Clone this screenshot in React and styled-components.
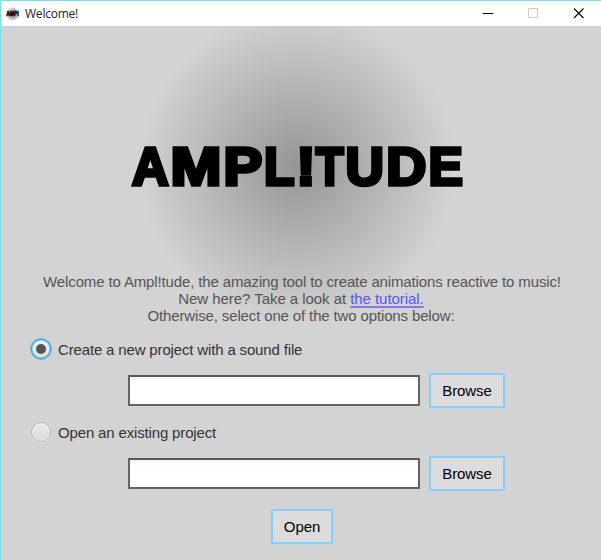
import React from "react";
import styled, { createGlobalStyle, css } from "styled-components";

const GlobalStyle = createGlobalStyle`
  * { box-sizing: border-box; }
  body { margin: 0; background: #d3d3d3; overflow: hidden; }
`;

const Window = styled.div`
  display: flex;
  flex-direction: column;
  width: 601px;
  height: 560px;
  border-top: 1px solid #79dfe8;
  border-left: 1px solid #79dfe8;
  background: #d3d3d3;
  font-family: "Liberation Sans", Arial, sans-serif;
  font-size: 15px;
`;

const TitleBar = styled.header`
  display: flex;
  align-items: center;
  height: 25px;
  flex: none;
  padding-left: 4px;
  background: #fff;
`;

const Title = styled.span`
  flex: 1;
  margin-left: 4px;
  font: 12px/24px "Open Sans", "Noto Sans", sans-serif;
  letter-spacing: -0.22px;
  color: #222;
`;

const WindowButton = styled.button`
  width: 45px;
  height: 25px;
  padding: 0;
  border: 0;
  background: none;
  color: ${(p) => (p.disabled ? "#ccc" : "#000")};
  svg { display: block; margin: 0 auto; }
`;

const Content = styled.main`
  flex: 1;
  display: flex;
  flex-direction: column;
  background: radial-gradient(circle 159px at 296px 141px,
    #959595 0%, #a7a7a7 28%, #b9b9b9 57%, #c9c9c9 84%, #d1d1d1 95%, #d3d3d3 100%);
`;

const Logo = styled.svg`
  display: block;
  flex: none;
  width: 600px;
  height: 247px;
`;

const Wordmark = styled.text`
  font: bold 53px "Liberation Sans", Arial, sans-serif;
  fill: #000;
  stroke: #000;
  stroke-width: 3.6px;
  stroke-linejoin: miter;
`;

const IconSvg = styled.svg`
  display: block;
  flex: none;
  width: 16px;
  height: 18px;
  overflow: visible;
`;

const IconText = styled.text`
  font: bold 7.5px "Liberation Sans", Arial, sans-serif;
  stroke: #000;
  stroke-width: 0.5px;
`;

const Intro = styled.div`
  height: 51px;
  text-align: center;
  line-height: 17px;
  color: #555;
`;

const IntroLine = styled.p`
  margin: 0;
  padding-left: ${(p) => p.$indent || 0}px;
  white-space: nowrap;
  letter-spacing: ${(p) => p.$spacing || 0}px;
`;

const Link = styled.a`
  color: #5a55f5;
  text-decoration: underline;
  text-decoration-color: #7d7aec;
  text-decoration-thickness: 2px;
  text-underline-offset: 2px;
`;

const Option = styled.section`
  height: 83px;
`;

const OptionLabel = styled.label`
  display: flex;
  align-items: center;
  gap: 7px;
  height: 22px;
  margin: 14px 0 0 30px;
  color: #333;
  white-space: nowrap;
  letter-spacing: -0.155px;
`;

const Radio = styled.span`
  display: grid;
  place-items: center;
  flex: none;
  width: 20px;
  height: 20px;
  border-radius: 50%;
  border: 1px solid #b5b5b5;
  background: linear-gradient(#ececec, #dadada);
  box-shadow: 0 1px 0 #e6e6e6, inset 0 0 0 1px #eee;
  ${(p) => p.$checked && css`
    border: 1px solid #1ba1d6;
    background: linear-gradient(#f2f2f2, #dedede);
    box-shadow: 0 0 1px 0.7px #4fb4de, inset 0 0 1px #1ba1d6;
    &::after {
      content: "";
      width: 10px;
      height: 10px;
      border-radius: 50%;
      background: #555;
    }
  `}
`;

const FieldRow = styled.div`
  display: flex;
  align-items: center;
  gap: 9px;
  height: 35px;
  margin: 13px 0 0 127px;
`;

const Field = styled.input`
  width: 292px;
  height: 31px;
  padding: 0 8px;
  border: 2px solid #646464;
  border-top-color: #585858;
  border-radius: 1px;
  outline: 0;
  background: linear-gradient(#f3f3f3, #fff 5px);
  font: inherit;
`;

const Button = styled.button`
  width: ${(p) => p.$width}px;
  height: 35px;
  padding: 0;
  border: 2px solid #87cefa;
  background: #dcdcdc;
  color: #000;
  font: inherit;
  letter-spacing: -0.1px;
`;

const Footer = styled.footer`
  display: flex;
  margin: 19px 0 0 270px;
`;

const AppIcon = () => (
  <IconSvg viewBox="0 -2 16 18">
    <defs>
      <radialGradient id="halo">
        <stop offset="0" stopColor="#888" />
        <stop offset="0.7" stopColor="#bbb" />
        <stop offset="1" stopColor="#eee" />
      </radialGradient>
    </defs>
    <circle cx="7.8" cy="7" r="6.8" fill="url(#halo)" />
    <IconText x="1.3" y="9.3" textLength="12.6" lengthAdjust="spacingAndGlyphs">AMP!</IconText>
  </IconSvg>
);

/* Each letter of the wordmark with its left edge and set width. */
const WORDMARK = [
  ["A", 131, 36.6],
  ["M", 169.5, 50.9],
  ["P", 222.6, 38.7],
  ["L", 263, 30.4],
  ["!", 295.2, 19.4],
  ["T", 314.8, 27.8],
  ["U", 344.4, 38.4],
  ["D", 385.3, 40.1],
  ["E", 427.5, 34.4],
];

function FileOption({ label, checked }) {
  return (
    <Option>
      <OptionLabel>
        <Radio $checked={checked} />
        {label}
      </OptionLabel>
      <FieldRow>
        <Field aria-label={label} />
        <Button $width={76}>Browse</Button>
      </FieldRow>
    </Option>
  );
}

export default function App() {
  return (
    <Window>
      <GlobalStyle />
      <TitleBar>
        <AppIcon />
        <Title>Welcome!</Title>
        <WindowButton aria-label="Minimize">
          <svg width="11" height="11"><path d="M0 5.5H10" stroke="currentColor" /></svg>
        </WindowButton>
        <WindowButton aria-label="Maximize" disabled>
          <svg width="11" height="11"><path d="M.5 .5H9.5V9.5H.5Z" fill="none" stroke="currentColor" /></svg>
        </WindowButton>
        <WindowButton aria-label="Close">
          <svg width="11" height="11"><path d="M1 .5L10.5 10M10.5 .5L1 10" stroke="currentColor" strokeWidth="1.1" /></svg>
        </WindowButton>
      </TitleBar>
      <Content>
        <Logo viewBox="0 0 600 247">
          <Wordmark y="158.5">
            {WORDMARK.map(([letter, x, width]) => (
              <tspan key={letter} x={x} textLength={width} lengthAdjust="spacingAndGlyphs">{letter}</tspan>
            ))}
          </Wordmark>
        </Logo>
        <Intro>
          <IntroLine $indent={2} $spacing={-0.135}>Welcome to Ampl!tude, the amazing tool to create animations reactive to music!</IntroLine>
          <IntroLine $spacing={-0.05}>New here? Take a look at <Link>the tutorial.</Link></IntroLine>
          <IntroLine $spacing={-0.14}>Otherwise, select one of the two options below:</IntroLine>
        </Intro>
        <FileOption label="Create a new project with a sound file" checked />
        <FileOption label="Open an existing project" />
        <Footer>
          <Button $width={62}>Open</Button>
        </Footer>
      </Content>
    </Window>
  );
}
